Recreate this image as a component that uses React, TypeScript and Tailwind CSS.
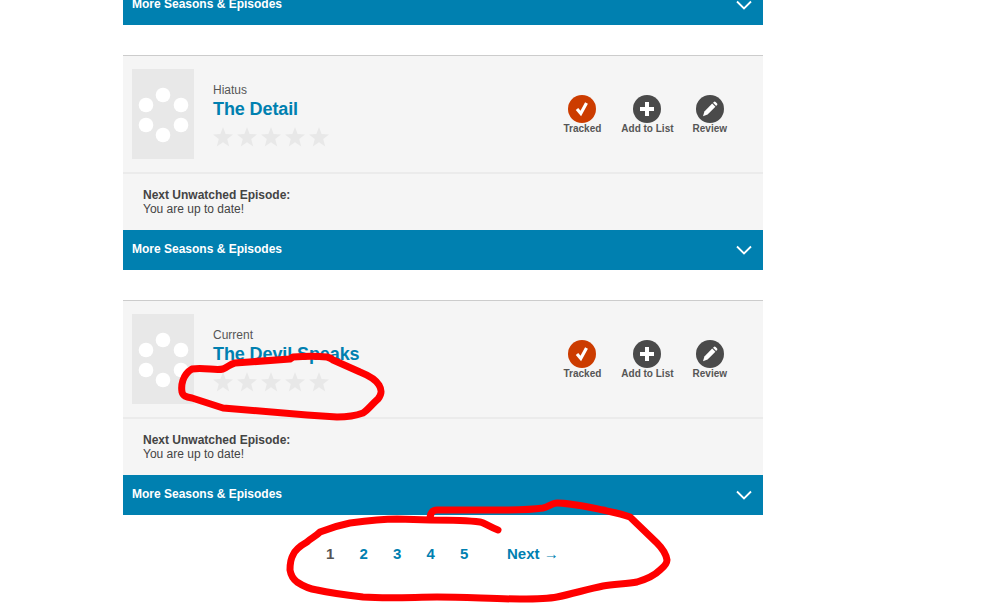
import React from "react";

const shows = [
  { status: "Hiatus", title: "The Detail" },
  { status: "Current", title: "The Devil Speaks" },
];

function SeasonsBar() {
  return (
    <div className="flex h-10 items-center justify-between bg-[#0080b0] pl-[9px] pr-[11px] text-xs font-bold text-white">
      <span className="mb-[2px]">More Seasons &amp; Episodes</span>
      <svg width="16" height="10" viewBox="0 0 16 10" fill="none" stroke="white" strokeWidth="1.8">
        <path d="M1 1.5 L8 8.5 L15 1.5" />
      </svg>
    </div>
  );
}

function Poster() {
  const dots = [
    [31, 26],
    [49, 36],
    [49, 56],
    [31, 66],
    [14, 56],
    [14, 36],
  ];
  return (
    <svg width="62" height="90" viewBox="0 0 62 90" className="shrink-0 bg-[#e8e8e8]">
      {dots.map(([cx, cy]) => (
        <circle key={`${cx}-${cy}`} cx={cx} cy={cy} r="7.3" fill="white" />
      ))}
    </svg>
  );
}

function Stars() {
  return (
    <div className="mt-[6px] flex gap-1">
      {[0, 1, 2, 3, 4].map((i) => (
        <svg key={i} width="20" height="20" viewBox="0 0 20 20" fill="#e8e8e8">
          <polygon points="10,0 12.6,7 20,7.4 14.2,12 16.2,19.4 10,15.3 3.8,19.4 5.8,12 0,7.4 7.4,7" />
        </svg>
      ))}
    </div>
  );
}

function Action({ label, color, children }: { label: string; color: string; children: React.ReactNode }) {
  return (
    <div className="flex flex-col items-center">
      <div className={`flex h-7 w-7 items-center justify-center rounded-full ${color}`}>{children}</div>
      <span className="whitespace-nowrap text-[10px] leading-[12px] font-bold text-[#555]">{label}</span>
    </div>
  );
}

function ShowCard({ status, title }: { status: string; title: string }) {
  return (
    <div className="border-t border-[#ccc] bg-[#f5f5f5]">
      <div className="flex h-[118px] items-center border-b-2 border-[#ebebeb] pl-[9px] pr-[36px]">
        <Poster />
        <div className="ml-[19px] flex flex-col pt-px">
          <span className="text-xs leading-[14px] text-[#555]">{status}</span>
          <a className="text-lg leading-[24px] font-bold tracking-[-0.1px] text-[#0080b0]">{title}</a>
          <Stars />
        </div>
        <div className="ml-auto mt-px flex gap-[19px]">
          <div className="mr-px">
            <Action label="Tracked" color="bg-[#cc3c00]">
              <svg width="16" height="16" viewBox="0 0 16 16" fill="none" stroke="white" strokeWidth="3.2">
                <path d="M3 8 L6.8 12.5 L12.5 2" />
              </svg>
            </Action>
          </div>
          <Action label="Add to List" color="bg-[#4a4a4a]">
            <svg width="14" height="14" viewBox="0 0 14 14" fill="white">
              <path d="M5 0 H9 V5 H14 V9 H9 V14 H5 V9 H0 V5 H5 Z" />
            </svg>
          </Action>
          <Action label="Review" color="bg-[#4a4a4a]">
            <svg width="16" height="16" viewBox="0 0 16 16" fill="white">
              <path d="M1 15.2 L2.4 10.4 L10.2 2.6 L13.4 5.8 L5.6 13.6 Z" />
              <path d="M11 1.8 L12.2 0.8 Q12.9 0.3 13.6 0.9 L15.1 2.4 Q15.7 3.1 15.2 3.8 L14.2 5 Z" />
            </svg>
          </Action>
        </div>
      </div>
      <div className="h-[56px] pl-5 pt-[14px] text-xs leading-[14px] text-[#444]">
        <div className="font-bold">Next Unwatched Episode:</div>
        <div>You are up to date!</div>
      </div>
      <SeasonsBar />
    </div>
  );
}

export default function App() {
  return (
    <div className="relative h-[603px] w-[984px] overflow-hidden bg-white font-['Liberation_Sans',Arial,sans-serif]">
      <div className="ml-[123px] w-[640px] -mt-[15px] flex flex-col gap-[30px]">
        <SeasonsBar />
        {shows.map((s) => (
          <ShowCard key={s.title} status={s.status} title={s.title} />
        ))}
      </div>

      <div className="ml-[123px] mt-[30px] flex w-[640px] text-[15px] leading-[18px] font-bold text-[#0080b0]">
        <div className="ml-[203px] flex">
          <span className="w-[33.5px] text-[#555]">1</span>
          <a className="w-[33.5px]">2</a>
          <a className="w-[33.5px]">3</a>
          <a className="w-[33.5px]">4</a>
          <a className="w-[47px]">5</a>
        </div>
        <a className="whitespace-nowrap">
          Next <span className="font-normal">→</span>
        </a>
      </div>

      {/* red marker scribbles drawn over the screenshot */}
      <svg className="pointer-events-none absolute left-0 top-0" width="984" height="603" fill="none" stroke="#ff0000" strokeWidth="7" strokeLinecap="round" strokeLinejoin="round">
        <path d="M192 369 C205 367 215 371 223 369 C228 367 230 364 235 363 L290 359 L293 357 C305 356 318 356 327 357 C331 358 332 359 333 360 L360 372 C370 376 376 380 379 385 C382 390 382 394 378 399 C372 404 368 410 363 413 C355 416 347 417 337 417 L307 415 L223 408 L192 398 C186 397 183 396 182 392 C181 386 182 375 192 369 Z" />
        <path d="M498 530 C490 527 485 523 480 522 C465 520 445 520 430 520 L397 519 C380 519 365 521 350 523 C340 525 330 528 320 532 C315 537 311 538 307 542 C300 546 295 550 293 555 C290 560 290 565 290 570 C291 576 293 579 297 582 C303 586 310 589 317 590 C330 593 345 595 363 597 C390 599 415 597 437 597 C465 597 495 599 520 599 C535 599 547 599 557 597 C572 594 588 589 603 586 C615 584 627 584 637 582 C647 579 655 575 660 570 C665 566 667 562 667 560 C666 553 662 548 657 543 L630 517 C622 514 612 512 603 510 C588 507 570 503 557 503 C552 503 548 507 543 508 C530 510 515 510 503 510 L437 510 C433 510 430 512 430 520" />
      </svg>
    </div>
  );
}
